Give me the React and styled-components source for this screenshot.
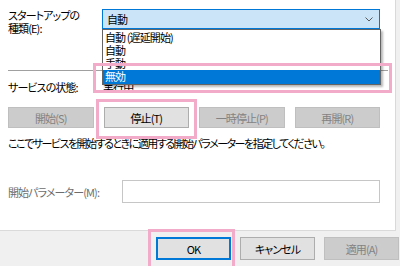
import React from "react";
import styled, { createGlobalStyle } from "styled-components";

const GlobalStyle = createGlobalStyle`
  html, body {
    margin: 0;
    padding: 0;
    background: #f0f0f0;
  }
  body {
    font-family: "Noto Sans CJK JP", "Noto Sans", sans-serif;
    font-size: 11px;
    letter-spacing: -0.9px;
    font-feature-settings: "palt";
    color: #000;
  }
`;

const startupOptions = ["自動 (遅延開始)", "自動", "手動", "無効"];

const App = () => {
  return (
    <Page>
      <GlobalStyle />
      <Panel>
        <StartupRow>
          <Label>
            スタートアップの
            <br />
            種類(E):
          </Label>
          <ComboWrap>
            <Combo>
              <span>自動</span>
              <Chevron viewBox="0 0 8 5" width="8" height="5">
                <polyline points="0.5,0.5 4,4 7.5,0.5" fill="none" stroke="#5a5a5a" strokeWidth="1" />
              </Chevron>
            </Combo>
            <DropList>
              {startupOptions.map((opt) => (
                <Option key={opt} selected={opt === "無効"}>
                  {opt}
                  {opt === "無効" && <Mark top={-7} left={-10} right={-12} bottom={-9} />}
                </Option>
              ))}
            </DropList>
          </ComboWrap>
        </StartupRow>
        <Separator />
        <StatusRow>
          <Label>サービスの状態:</Label>
          <StatusValue>実行中</StatusValue>
        </StatusRow>
        <ButtonRow>
          <ServiceButton disabled>開始(S)</ServiceButton>
          <ServiceButton>
            停止(T)
            <Mark top={-9} left={-9} right={-9} bottom={-12} />
          </ServiceButton>
          <ServiceButton disabled>一時停止(P)</ServiceButton>
          <ServiceButton disabled>再開(R)</ServiceButton>
        </ButtonRow>
        <Hint>ここでサービスを開始するときに適用する開始パラメーターを指定してください。</Hint>
        <ParamRow>
          <ParamLabel>開始パラメーター(M):</ParamLabel>
          <ParamInput />
        </ParamRow>
      </Panel>
      <Footer>
        <DialogButton primary>
          OK
          <Mark top={-9} left={-9} right={-5} bottom={-12} />
        </DialogButton>
        <DialogButton>キャンセル</DialogButton>
        <DialogButton disabled>適用(A)</DialogButton>
      </Footer>
    </Page>
  );
};

const Page = styled.div`
  width: 400px;
  height: 266px;
  display: flex;
  flex-direction: column;
  overflow: hidden;
  background: #f0f0f0;
`;
const Panel = styled.div`
  flex: 1;
  background: #fff;
  width: 396px;
  border-right: 1px solid #d9d9d9;
  border-bottom: 1px solid #dadada;
  padding: 9px 0 0 8px;
  box-sizing: border-box;
`;
const StartupRow = styled.div`
  display: flex;
  align-items: flex-start;
`;
const Label = styled.div`
  width: 94px;
  line-height: 13px;
  white-space: nowrap;
`;
const ComboWrap = styled.div`
  position: relative;
  width: 278px;
`;
const Combo = styled.div`
  height: 20px;
  box-sizing: border-box;
  border: 1px solid #0078d7;
  background: #cce4f7;
  display: flex;
  align-items: center;
  justify-content: space-between;
  padding: 0 6px 0 4px;
  line-height: 18px;
`;
const Chevron = styled.svg`
  display: block;
`;
const DropList = styled.div`
  position: absolute;
  top: 20px;
  left: 0;
  width: 279px;
  box-sizing: border-box;
  border: 1px solid #646464;
  background: #fff;
  box-shadow: 2px 2px 2px rgba(0, 0, 0, 0.28);
  z-index: 2;
`;
const Option = styled.div`
  position: relative;
  height: 13px;
  line-height: 13px;
  padding-left: 2px;
  white-space: nowrap;
  color: ${(props) => (props.selected ? "#fff" : "#000")};
  background: ${(props) => (props.selected ? "#0078d7" : "transparent")};
  &:first-child {
    margin-top: 1px;
  }
  &:last-child {
    height: 14px;
  }
`;
const Mark = styled.span`
  position: absolute;
  top: ${(props) => props.top}px;
  left: ${(props) => props.left}px;
  right: ${(props) => props.right}px;
  bottom: ${(props) => props.bottom}px;
  border: 3px solid #f2abc9;
  pointer-events: none;
  z-index: 3;
`;
const Separator = styled.div`
  margin-top: 35px;
  width: 380px;
  height: 1px;
  background: #a0a0a0;
`;
const StatusRow = styled.div`
  display: flex;
  margin-top: 10px;
  line-height: 13px;
`;
const StatusValue = styled.div`
  padding-left: 1px;
`;
const ButtonRow = styled.div`
  margin-top: 13px;
  width: 372px;
  display: grid;
  grid-template-columns: repeat(4, 1fr);
  gap: 10px;
`;
const ServiceButton = styled.div`
  position: relative;
  height: 21px;
  box-sizing: border-box;
  display: flex;
  align-items: center;
  justify-content: center;
  border: 1px solid ${(props) => (props.disabled ? "#bfbfbf" : "#adadad")};
  background: ${(props) => (props.disabled ? "#cccccc" : "#e1e1e1")};
  color: ${(props) => (props.disabled ? "#838383" : "#000")};
`;
const Hint = styled.div`
  margin-top: 9px;
  line-height: 13px;
  letter-spacing: -1.5px;
  white-space: nowrap;
`;
const ParamRow = styled.div`
  margin-top: 30px;
  display: flex;
  align-items: center;
`;
const ParamLabel = styled.div`
  width: 114px;
  color: #6d6d6d;
  white-space: nowrap;
`;
const ParamInput = styled.div`
  width: 258px;
  height: 23px;
  box-sizing: border-box;
  border: 1px solid #c6c6c6;
  background: #fff;
`;
const Footer = styled.div`
  height: 35px;
  display: flex;
  justify-content: flex-end;
  align-items: flex-start;
  gap: 9px;
  padding: 6px 1px 0 0;
  box-sizing: border-box;
`;
const DialogButton = styled.div`
  position: relative;
  width: 75px;
  height: 23px;
  box-sizing: border-box;
  display: flex;
  align-items: center;
  justify-content: center;
  border: 1px solid ${(props) => (props.primary ? "#0078d7" : props.disabled ? "#bfbfbf" : "#adadad")};
  box-shadow: ${(props) => (props.primary ? "inset 0 0 0 1px #0078d7" : "none")};
  background: ${(props) => (props.disabled ? "#cccccc" : "#e1e1e1")};
  color: ${(props) => (props.disabled ? "#838383" : "#000")};
`;

export default App;
